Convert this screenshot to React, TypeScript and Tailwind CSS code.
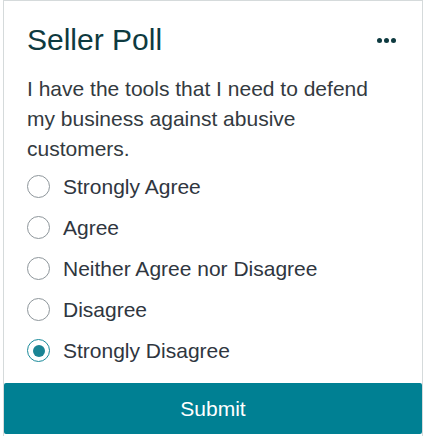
import { useState } from 'react'

const options = ['Strongly Agree', 'Agree', 'Neither Agree nor Disagree', 'Disagree', 'Strongly Disagree']

export default function App() {
  const [picked, setPicked] = useState(4)

  return (
    <div className="w-[438px] h-[436px] bg-white" style={{ fontFamily: '"Liberation Sans", Arial, sans-serif' }}>
      <div className="ml-[3px] w-[420px] h-[436px] border border-[#d5dadb] border-b-0 flex flex-col">
        <div className="flex items-center justify-between pl-[23px] pr-[26px] pt-[19px] h-[58px]">
          <h1 className="text-[30px] leading-none text-[#0e3a40]">Seller Poll</h1>
          <div className="flex gap-[2px] mt-[2px]">
            <span className="w-[5px] h-[5px] rounded-full bg-[#0e3a40]" />
            <span className="w-[5px] h-[5px] rounded-full bg-[#0e3a40]" />
            <span className="w-[5px] h-[5px] rounded-full bg-[#0e3a40]" />
          </div>
        </div>
        <p className="pl-[23px] pr-[36px] mt-[15px] text-[21px] leading-[30px] text-[#333a40]">
          I have the tools that I need to defend my business against abusive customers.
        </p>
        <div className="flex flex-col pl-[23px] mt-[2px]">
          {options.map((o, i) => (
            <label key={o} className="flex items-center h-[41px] cursor-pointer" onClick={() => setPicked(i)}>
              <span
                className={`w-[23px] h-[23px] rounded-full border flex items-center justify-center ${
                  picked === i ? 'border-[#1a8a9a]' : 'border-[#8e969b]'
                }`}
              >
                {picked === i && <span className="w-[12px] h-[12px] rounded-full bg-[#1a8494]" />}
              </span>
              <span className="ml-[13px] text-[21px] text-[#2f3640]">{o}</span>
            </label>
          ))}
        </div>
        <button className="mt-auto mb-[2px] mx-0 h-[51px] rounded-[2px] bg-[#008093] text-white text-[21px]">
          Submit
        </button>
      </div>
    </div>
  )
}
